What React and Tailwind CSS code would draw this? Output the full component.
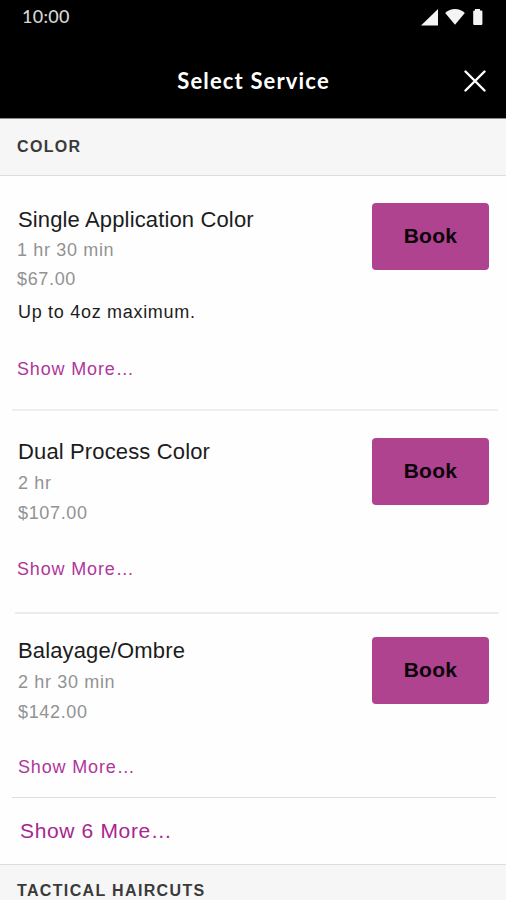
const SERVICES = [
  {
    name: "Single Application Color",
    duration: "1 hr 30 min",
    price: "$67.00",
    note: "Up to 4oz maximum.",
    row: "h-[233px] pt-[28px]",
    button: "-mt-px",
    more: "mt-[25px] pl-[17px]",
    meta: "pl-[17px] leading-[29px]",
    divider: "ml-[12px] mr-[8px] h-[2px] bg-[#efefef]",
  },
  {
    name: "Dual Process Color",
    duration: "2 hr",
    price: "$107.00",
    row: "h-[201px] pt-[25px]",
    button: "mt-[2px]",
    more: "mt-[27px] pl-[17px]",
    meta: "pl-[18px] leading-[30px]",
    divider: "ml-[15px] mr-[7px] h-[2px] bg-[#ececec]",
  },
  {
    name: "Balayage/Ombre",
    duration: "2 hr 30 min",
    price: "$142.00",
    row: "h-[183px] pt-[21px]",
    button: "mt-[2px]",
    more: "mt-[26px] pl-[18px]",
    meta: "pl-[18px] leading-[30px]",
    divider: "ml-[12px] mr-[10px] h-px bg-[#dedede]",
  },
];

export default function App() {
  return (
    <main className="flex h-[900px] w-[506px] flex-col overflow-hidden bg-[#fefefe] font-['Liberation_Sans',Arial,sans-serif] text-[#1c1c1c]">
      <header className="h-[118px] shrink-0 bg-black text-white">
        <StatusBar />
        <div className="grid h-[84px] grid-cols-[1fr_auto_1fr] items-center">
          <h1 className="col-start-2 pl-px pt-[8px] font-['Lato',sans-serif] text-[22px] font-bold tracking-[1.15px]">
            Select Service
          </h1>
          <button type="button" aria-label="Close" className="mr-[20px] mt-[10px] justify-self-end">
            <CloseIcon />
          </button>
        </div>
      </header>

      <div className="h-[58px] shrink-0 border-b border-t border-b-[#dcdcdc] border-t-[#8c8c8c] bg-[#f6f6f6]">
        <SectionTitle className="mt-[11px]">COLOR</SectionTitle>
      </div>

      {SERVICES.map((service) => (
        <ServiceRow key={service.name} service={service} />
      ))}

      <button
        type="button"
        className="h-[66px] shrink-0 pl-[20px] text-left text-[21px] tracking-[0.65px] text-[#a8278f]"
      >
        Show 6 More…
      </button>

      <div className="h-[58px] shrink-0 border-t border-[#dcdcdc] bg-[#f6f6f6]">
        <SectionTitle className="mt-[9px]">TACTICAL HAIRCUTS</SectionTitle>
      </div>
    </main>
  );
}

function ServiceRow({ service }) {
  return (
    <>
      <section className={`flex shrink-0 items-start justify-between pr-[17px] ${service.row}`}>
        <div>
          <h2 className="pl-[18px] text-[22px] leading-[32px] tracking-[0.14px]">{service.name}</h2>
          <div className={`text-[18px] tracking-[0.65px] text-[#929292] ${service.meta}`}>
            <div>{service.duration}</div>
            <div>{service.price}</div>
          </div>
          {service.note ? (
            <p className="pl-[18px] text-[18px] leading-[36px] tracking-[0.7px]">{service.note}</p>
          ) : null}
          <button
            type="button"
            className={`block text-[18px] leading-[28px] tracking-[0.85px] text-[#b0369a] ${service.more}`}
          >
            Show More…
          </button>
        </div>
        <button
          type="button"
          className={`h-[67px] w-[117px] rounded-[4px] bg-[#b04390] pb-px text-[21px] font-bold tracking-[0.3px] text-[#0c020a] ${service.button}`}
        >
          Book
        </button>
      </section>
      <div className={`shrink-0 ${service.divider}`} />
    </>
  );
}

function SectionTitle({ className, children }) {
  return (
    <h3 className={`pl-[17px] text-[16px] font-bold leading-[34px] tracking-[1.35px] text-[#3a3a3a] ${className}`}>
      {children}
    </h3>
  );
}

function StatusBar() {
  return (
    <div className="flex h-[34px] items-center justify-between pl-[22px] pr-[22px]">
      <span className="-mt-[2px] font-['Lato',sans-serif] text-[18px] font-medium tracking-[0.3px] text-[#d6d6d6]">
        10:00
      </span>
      <svg width="64" height="18" viewBox="0 0 64 18" fill="#f4f4f4" aria-hidden="true">
        <path d="M18 1v16.500h-17z" />
        <path d="M35 16.800 25.200 5c2.800-2.800 6-4 9.800-4s7 1.200 9.800 4z" />
        <path d="M55 1h5v1.500h1.500c.5 0 .9.400.9.900v12.700c0 .5-.4.900-.9.900h-7.400c-.5 0-.9-.4-.9-.9V3.400c0-.5.4-.9.900-.9h.900z" />
      </svg>
    </div>
  );
}

function CloseIcon() {
  return (
    <svg width="22" height="22" viewBox="0 0 22 22" fill="none" stroke="#fff" strokeWidth="2.4" strokeLinecap="round">
      <path d="M1.500 1.500l19 19M20.500 1.500l-19 19" />
    </svg>
  );
}
